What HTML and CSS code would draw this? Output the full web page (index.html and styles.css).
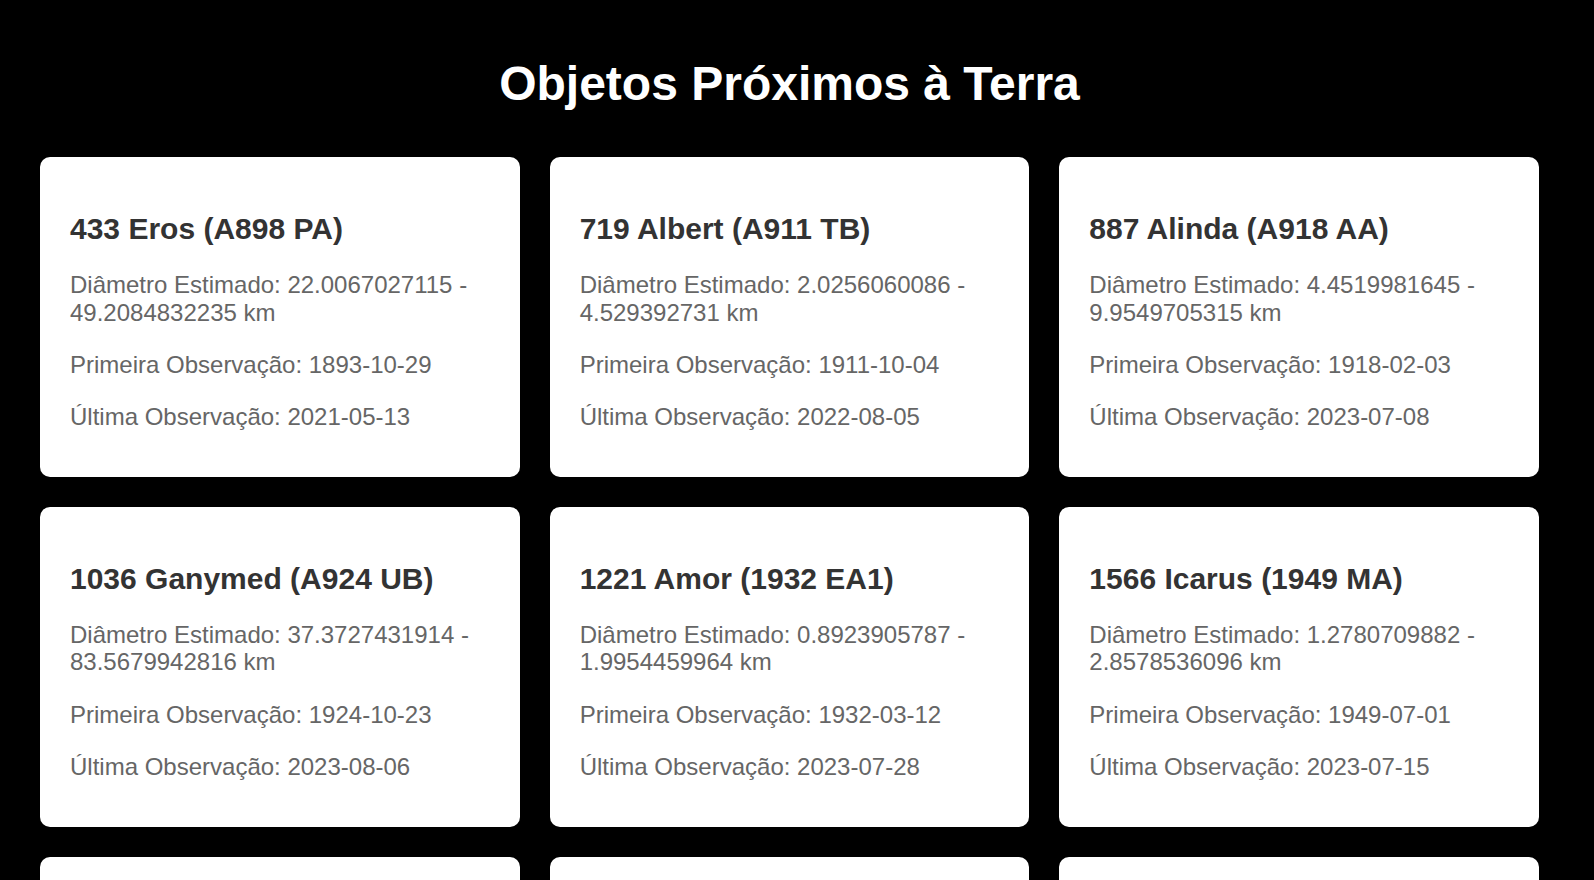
FILE: index.html
```html
<!DOCTYPE html>
<html lang="pt-BR">
<head>
<meta charset="utf-8">
<title>Objetos Próximos à Terra</title>
<link rel="stylesheet" href="styles.css">
</head>
<body>
<div class="page">
  <h1 class="page-title">Objetos Próximos à Terra</h1>
  <div class="grid">
    <div class="card">
      <h2 class="card-title">433 Eros (A898 PA)</h2>
      <p class="card-text">Diâmetro Estimado: 22.0067027115 - 49.2084832235 km</p>
      <p class="card-text">Primeira Observação: 1893-10-29</p>
      <p class="card-text">Última Observação: 2021-05-13</p>
    </div>
    <div class="card">
      <h2 class="card-title">719 Albert (A911 TB)</h2>
      <p class="card-text">Diâmetro Estimado: 2.0256060086 - 4.529392731 km</p>
      <p class="card-text">Primeira Observação: 1911-10-04</p>
      <p class="card-text">Última Observação: 2022-08-05</p>
    </div>
    <div class="card">
      <h2 class="card-title">887 Alinda (A918 AA)</h2>
      <p class="card-text">Diâmetro Estimado: 4.4519981645 - 9.9549705315 km</p>
      <p class="card-text">Primeira Observação: 1918-02-03</p>
      <p class="card-text">Última Observação: 2023-07-08</p>
    </div>
    <div class="card">
      <h2 class="card-title">1036 Ganymed (A924 UB)</h2>
      <p class="card-text">Diâmetro Estimado: 37.3727431914 - 83.5679942816 km</p>
      <p class="card-text">Primeira Observação: 1924-10-23</p>
      <p class="card-text">Última Observação: 2023-08-06</p>
    </div>
    <div class="card">
      <h2 class="card-title">1221 Amor (1932 EA1)</h2>
      <p class="card-text">Diâmetro Estimado: 0.8923905787 - 1.9954459964 km</p>
      <p class="card-text">Primeira Observação: 1932-03-12</p>
      <p class="card-text">Última Observação: 2023-07-28</p>
    </div>
    <div class="card">
      <h2 class="card-title">1566 Icarus (1949 MA)</h2>
      <p class="card-text">Diâmetro Estimado: 1.2780709882 - 2.8578536096 km</p>
      <p class="card-text">Primeira Observação: 1949-07-01</p>
      <p class="card-text">Última Observação: 2023-07-15</p>
    </div>
    <div class="card">
      <h2 class="card-title">1580 Betulia (1950 KA)</h2>
      <p class="card-text">Diâmetro Estimado: 3.0081823422 - 6.7264395962 km</p>
      <p class="card-text">Primeira Observação: 1950-05-22</p>
      <p class="card-text">Última Observação: 2023-06-24</p>
    </div>
    <div class="card">
      <h2 class="card-title">1620 Geographos (1951 RA)</h2>
      <p class="card-text">Diâmetro Estimado: 2.0906876142 - 4.6749183326 km</p>
      <p class="card-text">Primeira Observação: 1951-08-31</p>
      <p class="card-text">Última Observação: 2023-08-04</p>
    </div>
    <div class="card">
      <h2 class="card-title">1627 Ivar (1929 SH)</h2>
      <p class="card-text">Diâmetro Estimado: 6.4211066604 - 14.3580837802 km</p>
      <p class="card-text">Primeira Observação: 1929-09-25</p>
      <p class="card-text">Última Observação: 2023-07-30</p>
    </div>
  </div>
</div>
</body>
</html>
```
FILE: styles.css
```css
html, body {
  margin: 0;
  padding: 0;
  background: #000;
}

body {
  font-family: "Liberation Sans", Arial, sans-serif;
}

.page {
  max-width: 1579px;
  box-sizing: border-box;
  padding: 24px 40px;
}

.page-title {
  margin: 32px 0 46px;
  font-size: 48px;
  font-weight: bold;
  color: #fff;
  text-align: center;
}

.grid {
  display: grid;
  grid-template-columns: repeat(3, 1fr);
  gap: 30px;
}

.card {
  background: #fff;
  border-radius: 10px;
  padding: 30px 30px 22px;
}

.card-title {
  margin: 25px 0 25px;
  font-size: 30px;
  font-weight: bold;
  color: #333;
}

.card-text {
  margin: 0 0 24.5px;
  font-size: 24px;
  line-height: 27.6px;
  color: #666;
}
```
